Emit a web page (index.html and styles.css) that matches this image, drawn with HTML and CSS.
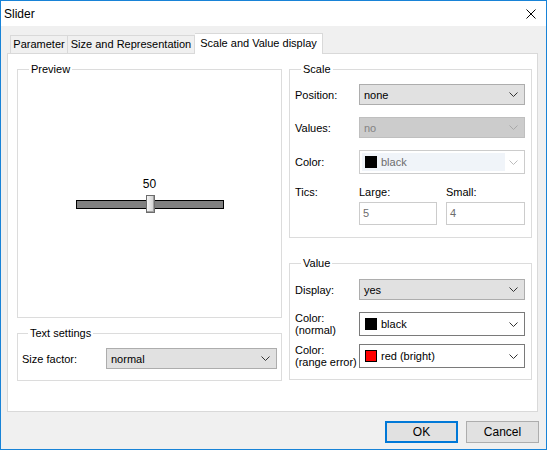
FILE: index.html
```html
<!DOCTYPE html>
<html lang="en">
<head>
    <meta charset="UTF-8">
    <title>Slider</title>
    <link rel="stylesheet" href="styles.css">
</head>
<body>
    <div class="window">
        <div class="titlebar">
            <span class="title">Slider</span>
            <svg class="close" width="10" height="10" viewBox="0 0 10 10">
                <path d="M0.5 0.5 L9.5 9.5 M9.5 0.5 L0.5 9.5" stroke="#000" stroke-width="1" fill="none"/>
            </svg>
        </div>

        <div class="dialog">
            <div class="tabs">
                <div class="tab tab-first">Parameter</div>
                <div class="tab tab-size">Size and Representation</div>
                <div class="tab active">Scale and Value display</div>
            </div>

            <div class="panel">
                <div class="column">
                    <fieldset class="group preview">
                        <legend>Preview</legend>
                        <div class="slider">
                            <div class="slider-value">50</div>
                            <div class="track">
                                <div class="thumb"></div>
                            </div>
                        </div>
                    </fieldset>

                    <fieldset class="group text-settings">
                        <legend>Text settings</legend>
                        <div class="row row-size">
                            <label>Size factor:</label>
                            <div class="combo combo-size">
                                <span class="combo-text">normal</span>
                                <svg class="chevron" width="9" height="5" viewBox="0 0 9 5"><path d="M0.5 0.5 L4.5 4.5 L8.5 0.5" stroke="#333" fill="none"/></svg>
                            </div>
                        </div>
                    </fieldset>
                </div>

                <div class="column">
                    <fieldset class="group scale">
                        <legend>Scale</legend>
                        <div class="row">
                            <label>Position:</label>
                            <div class="combo">
                                <span class="combo-text">none</span>
                                <svg class="chevron" width="9" height="5" viewBox="0 0 9 5"><path d="M0.5 0.5 L4.5 4.5 L8.5 0.5" stroke="#333" fill="none"/></svg>
                            </div>
                        </div>
                        <div class="row">
                            <label>Values:</label>
                            <div class="combo disabled">
                                <span class="combo-text">no</span>
                                <svg class="chevron" width="9" height="5" viewBox="0 0 9 5"><path d="M0.5 0.5 L4.5 4.5 L8.5 0.5" stroke="#a8a8a8" fill="none"/></svg>
                            </div>
                        </div>
                        <div class="row">
                            <label>Color:</label>
                            <div class="combo color-combo disabled-color">
                                <span class="combo-inner">
                                    <span class="swatch black"></span>
                                    <span class="combo-text">black</span>
                                </span>
                                <svg class="chevron" width="9" height="5" viewBox="0 0 9 5"><path d="M0.5 0.5 L4.5 4.5 L8.5 0.5" stroke="#bcbcbc" fill="none"/></svg>
                            </div>
                        </div>
                        <div class="tics">
                            <label class="tics-label">Tics:</label>
                            <div class="tic tic-large">
                                <label>Large:</label>
                                <div class="edit">5</div>
                            </div>
                            <div class="tic tic-small">
                                <label>Small:</label>
                                <div class="edit">4</div>
                            </div>
                        </div>
                    </fieldset>

                    <fieldset class="group value">
                        <legend>Value</legend>
                        <div class="row">
                            <label>Display:</label>
                            <div class="combo">
                                <span class="combo-text">yes</span>
                                <svg class="chevron" width="9" height="5" viewBox="0 0 9 5"><path d="M0.5 0.5 L4.5 4.5 L8.5 0.5" stroke="#333" fill="none"/></svg>
                            </div>
                        </div>
                        <div class="row row-color">
                            <label>Color:<br>(normal)</label>
                            <div class="combo color-combo">
                                <span class="combo-inner">
                                    <span class="swatch black"></span>
                                    <span class="combo-text">black</span>
                                </span>
                                <svg class="chevron" width="9" height="5" viewBox="0 0 9 5"><path d="M0.5 0.5 L4.5 4.5 L8.5 0.5" stroke="#333" fill="none"/></svg>
                            </div>
                        </div>
                        <div class="row row-color">
                            <label>Color:<br>(range error)</label>
                            <div class="combo color-combo">
                                <span class="combo-inner">
                                    <span class="swatch red"></span>
                                    <span class="combo-text">red (bright)</span>
                                </span>
                                <svg class="chevron" width="9" height="5" viewBox="0 0 9 5"><path d="M0.5 0.5 L4.5 4.5 L8.5 0.5" stroke="#333" fill="none"/></svg>
                            </div>
                        </div>
                    </fieldset>
                </div>
            </div>

            <div class="buttons">
                <button type="button" class="btn default">OK</button>
                <button type="button" class="btn">Cancel</button>
            </div>
        </div>
    </div>
</body>
</html>
```

FILE: styles.css
```css
* {
    box-sizing: border-box;
}
body {
    margin: 0;
    font-family: "Liberation Sans", Arial, sans-serif;
    font-size: 11px;
    color: #000;
    background-color: #f0f0f0;
}
.window {
    width: 547px;
    height: 450px;
    border: 1px solid #1883d7;
    background-color: #f0f0f0;
    display: flex;
    flex-direction: column;
}
.titlebar {
    height: 25px;
    background-color: #fff;
    display: flex;
    align-items: center;
    justify-content: space-between;
    padding: 0 10px 0 3px;
    flex-shrink: 0;
}
.title {
    font-size: 12px;
}
.dialog {
    padding: 7px 8px 0 6px;
}
.tabs {
    display: flex;
    align-items: flex-end;
    padding-left: 3px;
    height: 20px;
    position: relative;
    z-index: 1;
}
.tab {
    width: 58px;
    height: 18px;
    line-height: 17px;
    text-align: center;
    border: 1px solid #d9d9d9;
    border-bottom: none;
    border-left: none;
    background-color: #f0f0f0;
}
.tab-first {
    border-left: 1px solid #d9d9d9;
}
.tab-size {
    width: 127px;
}
.tab.active {
    width: 128px;
    height: 21px;
    line-height: 19px;
    margin-bottom: -1px;
    background-color: #fff;
}
.panel {
    height: 359px;
    background-color: #fff;
    border: 1px solid #d9d9d9;
    display: grid;
    grid-template-columns: 265px 243px;
    column-gap: 7px;
    padding: 8px 0 0 9px;
}
.column {
    display: flex;
    flex-direction: column;
}
.group {
    margin: 0;
    min-width: 0;
    border: 1px solid #dcdcdc;
    padding: 0 5px;
}
.group legend {
    margin-left: 6px;
    padding: 0 2px;
    line-height: 14px;
}
.preview {
    height: 256px;
}
.text-settings {
    height: 55px;
    margin-top: 8px;
    padding: 8px 4px 0 4px;
}
.scale {
    height: 176px;
    padding: 8px 6px 0 5px;
}
.value {
    height: 124px;
    margin-top: 18px;
    padding: 9px 6px 0 5px;
}

/* slider preview */
.slider {
    display: flex;
    flex-direction: column;
    align-items: center;
    padding-top: 101px;
}
.slider-value {
    font-size: 12px;
    line-height: 14px;
    margin-bottom: 9px;
}
.track {
    width: 148px;
    height: 9px;
    background-color: #808080;
    border: 1px solid #000;
    position: relative;
}
.thumb {
    position: absolute;
    left: 69px;
    top: -6px;
    width: 9px;
    height: 18px;
    border: 1px solid #6c6c6c;
    background: linear-gradient(to right, #f4f4f4, #cfcfcf);
    box-shadow: inset -1px -1px 0 #a0a0a0;
}

/* form rows */
.row {
    display: flex;
    align-items: center;
    margin-bottom: 12px;
}
.row label {
    width: 64px;
    flex-shrink: 0;
}
.row-size label {
    width: 84px;
}
.row-color {
    margin-bottom: 8px;
}
.row-color label {
    line-height: 12px;
}
.combo {
    flex: 1;
    height: 21px;
    display: flex;
    align-items: center;
    justify-content: space-between;
    padding: 0 6px 0 4px;
    background-color: #e1e1e1;
    border: 1px solid #adadad;
}
.combo-size {
    flex: none;
    width: 171px;
}
.combo.disabled {
    background-color: #cccccc;
    border-color: #bfbfbf;
    color: #838383;
}
.color-combo {
    height: 24px;
    background-color: #fff;
    border-color: #7a7a7a;
    padding-left: 5px;
}
.combo-inner {
    display: flex;
    align-items: center;
}
.disabled-color {
    border-color: #cccccc;
    color: #6d6d6d;
    padding-left: 2px;
}
.disabled-color .combo-inner {
    background-color: #f0f4f9;
    height: 18px;
    width: 143px;
    padding-left: 3px;
}
.swatch {
    width: 12px;
    height: 12px;
    border: 1px solid #000;
    margin-right: 4px;
}
.swatch.black {
    background-color: #000;
}
.swatch.red {
    background-color: #ff0000;
}
.chevron {
    flex-shrink: 0;
}

/* tics */
.tics {
    display: flex;
    margin-top: 12px;
}
.tics-label {
    width: 64px;
}
.tic {
    display: flex;
    flex-direction: column;
    gap: 4px;
}
.tic-large {
    width: 78px;
}
.tic-small {
    width: 79px;
    margin-left: 9px;
}
.edit {
    height: 23px;
    border: 1px solid #cccccc;
    background-color: #fff;
    color: #6d6d6d;
    padding: 4px 3px 0;
}

/* buttons */
.buttons {
    display: flex;
    justify-content: flex-end;
    gap: 8px;
    margin: 9px -1px 0 0;
}
.btn {
    width: 73px;
    height: 22px;
    font-family: inherit;
    font-size: 12px;
    background-color: #e1e1e1;
    border: 1px solid #adadad;
    padding: 0;
}
.btn.default {
    border: 2px solid #0078d7;
}
```
